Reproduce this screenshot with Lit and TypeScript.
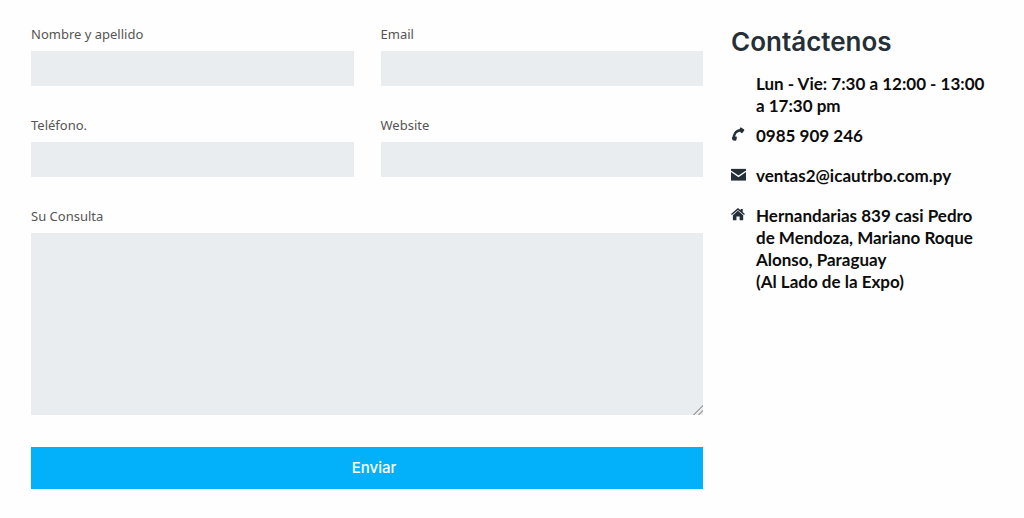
import { LitElement, html, css, svg } from "lit";
import { customElement } from "lit/decorators.js";

const phoneIcon = svg`<path d="M3.200 12.500C2.400 8.500 5 3.700 10.200 3.400" fill="none" stroke="#252f38" stroke-width="2.600"/><path d="M9.400 1C9.600.5 10.200.3 10.700.6L13.700 2.500C14.300 2.900 14.400 3.400 14 3.900L12 6.300C11.500 6.700 11 6.600 10.600 6.100L9.600 4.800ZM.9 10.900 5.200 10.100C5.900 10.100 6.300 10.500 6.200 11.100L5.800 13.700C5.700 14.300 5.300 14.700 4.700 14.700L2.800 14.500C2.200 14.400 1.700 14 1.500 13.500Z"/>`;
const mailIcon = svg`<path d="M0 2H16V14.500H0Z"/><path d="M0 4.600 8 10 16 4.600" fill="none" stroke="#fefefe" stroke-width="1.400"/>`;
const homeIcon = svg`<path d="M7.400 1 10.300 3.400V2H12.500V5.400L14.800 7.400 13.900 8.500 7.400 3.100.9 8.500 0 7.400ZM7.400 4 13 8.700V14H9.200V10H5.800V14H2V8.700Z"/>`;

@customElement("app-root")
export class AppRoot extends LitElement {
  static styles = css`
    :host {
      display: block;
      min-height: 100vh;
      background: #fefefe;
      font-family: "Noto Sans", sans-serif;
    }
    .page {
      display: grid;
      grid-template-columns: minmax(0, 672fr) minmax(0, 265fr);
      gap: 28px;
      padding: 27px 28px 29px 31px;
    }
    .form {
      display: grid;
      grid-template-columns: 1fr 1fr;
      gap: 32px 27px;
    }
    .field {
      display: flex;
      flex-direction: column;
      gap: 9px;
    }
    .wide {
      grid-column: 1 / -1;
    }
    .label {
      font-size: 13px;
      line-height: 15px;
      color: #555;
    }
    .control {
      box-sizing: border-box;
      display: block;
      width: 100%;
      height: 35px;
      margin: 0;
      padding: 6px 10px;
      border: 0;
      border-radius: 0;
      background: #e9edf0;
      color: #333;
      font: inherit;
      font-size: 13px;
    }
    .area {
      height: 182px;
      resize: vertical;
    }
    .area::-webkit-resizer {
      background: linear-gradient(
        135deg,
        transparent 66%,
        #aaa 66% 73%,
        transparent 73% 81%,
        #aaa 81% 88%,
        transparent 88%
      );
    }
    .submit {
      height: 42px;
      padding: 0 0 0 14px;
      border: 0;
      background: #03b1fb;
      color: #fff;
      font: 500 15px/20px Inter, sans-serif;
      cursor: pointer;
    }
    .title {
      margin: 0 0 16px;
      font: 600 26px/30px Inter, sans-serif;
      color: #252f38;
    }
    .contact {
      font: 700 17px/22px Lato, sans-serif;
      color: #0c0c0c;
    }
    .hours {
      margin: 0 0 8px;
      padding-left: 25px;
    }
    .list {
      display: grid;
      gap: 18px;
      margin: 0;
      font-style: normal;
    }
    .item {
      display: grid;
      grid-template-columns: 15px 1fr;
      gap: 10px;
    }
    .icon {
      width: 15px;
      height: 15px;
      margin-top: 2px;
      fill: #252f38;
    }
    .link {
      color: inherit;
      text-decoration: none;
    }
  `;

  private submit(event: Event) {
    event.preventDefault();
  }

  private field(id: string, label: string, type: string) {
    return html`<div class="field">
      <label class="label" for=${id}>${label}</label>
      <input class="control" id=${id} name=${id} type=${type} />
    </div>`;
  }

  private icon(shape: unknown) {
    return html`<svg class="icon" viewBox="0 0 16 16" aria-hidden="true">${shape}</svg>`;
  }

  render() {
    return html`<main class="page">
      <form class="form" @submit=${this.submit}>
        ${this.field("nombre", "Nombre y apellido", "text")}
        ${this.field("email", "Email", "email")}
        ${this.field("telefono", "Teléfono.", "tel")}
        ${this.field("website", "Website", "url")}
        <div class="field wide">
          <label class="label" for="consulta">Su Consulta</label>
          <textarea class="control area" id="consulta" name="consulta"></textarea>
        </div>
        <button class="submit wide" type="submit">Enviar</button>
      </form>
      <aside>
        <h2 class="title">Contáctenos</h2>
        <div class="contact">
          <p class="hours">Lun - Vie: 7:30 a 12:00 - 13:00<br />a 17:30 pm</p>
          <address class="list">
            <div class="item">
              ${this.icon(phoneIcon)}
              <a class="link" href="tel:0985909246">0985 909 246</a>
            </div>
            <div class="item">
              ${this.icon(mailIcon)}
              <a class="link" href="mailto:ventas2@icautrbo.com.py">ventas2@icautrbo.com.py</a>
            </div>
            <div class="item">
              ${this.icon(homeIcon)}
              <span>Hernandarias 839 casi Pedro<br />de Mendoza, Mariano Roque<br />Alonso, Paraguay<br />(Al Lado de la Expo)</span>
            </div>
          </address>
        </div>
      </aside>
    </main>`;
  }
}
